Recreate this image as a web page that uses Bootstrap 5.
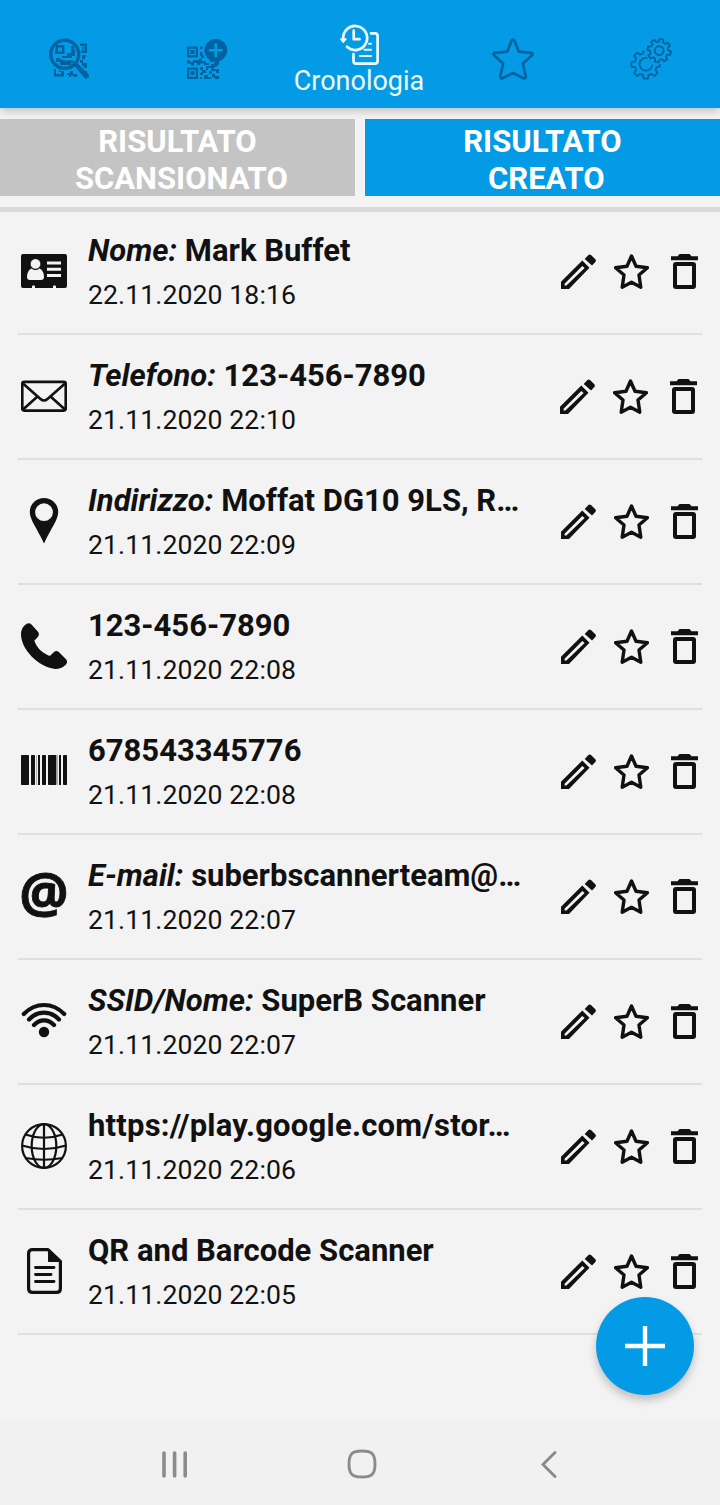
<!DOCTYPE html>
<html lang="it">
<head>
<meta charset="utf-8">
<meta name="viewport" content="width=device-width, initial-scale=1">
<title>Cronologia</title>
<link href="https://cdn.jsdelivr.net/npm/bootstrap@5.3.0/dist/css/bootstrap.min.css" rel="stylesheet">
<style>
  body { font-family: Roboto, "Liberation Sans", sans-serif; background: #f3f3f3; color: #111; width: 720px; height: 1505px; overflow: hidden; }
  svg { display: block; flex: none; }
  .topbar { height: 108px; background: #049be6; color: #00629f; box-shadow: 0 2px 9px rgba(0,0,0,.25); z-index: 2; }
  .topbar .tab-item { width: 138px; height: 118px; }
  .topbar .tab-active { width: 168px; height: 108px; color: #eefcff; padding: 23px 2px 0 0; }
  .tab-label { font-size: 27px; line-height: 30px; margin-top: 1px; }
  .switcher { margin-top: 11px; gap: 10px; }
  .switcher .btn { height: 77px; border-radius: 0; border: 0; padding: 4px 0 0; font-weight: 700; font-size: 31px; line-height: 37px; color: #fff; white-space: pre; background: #c4c4c4; }
  .switcher .btn.on { background: #049be6; }
  .rule { height: 5px; background: #d9d9d9; margin: 11px 0 -2px; flex: none; }
  .entry { height: 125px; border-bottom: 2px solid #dfdfdf; margin: 0 18px; padding: 0 4px 0 3px; }
  .entry .kind { margin-top: 38px; width: 46px; height: 46px; }
  .entry .info { margin-left: 21px; padding-top: 22px; width: 473px; white-space: nowrap; }
  .entry .title { font-weight: 700; font-size: 31px; line-height: 37px; }
  .entry .title.link { letter-spacing: .23px; }
  .entry .date { font-size: 26.6px; line-height: 34px; margin-top: 9px; letter-spacing: .1px; }
  .entry .tools { margin-top: 44px; gap: 18px; height: 35px; }
  .entry .tools svg:last-child { margin-left: 4px; }
  .entry.nudge .tools { margin-left: -1px; }
  .fab { width: 98px; height: 98px; left: 596px; top: 1297px; background: #049be6; box-shadow: 0 5px 8px rgba(0,0,0,.22); }
  .sysbar { height: 84px; background: #f1f1f1; padding: 2px 78px 0 81px; color: #8b8b8b; }
</style>
</head>
<body class="d-flex flex-column position-relative">

<svg class="d-none">
  <symbol id="pencil" viewBox="0 0 35 35"><path fill="currentColor" fill-rule="evenodd" d="M0 35V27.700L21.300 6.500l7.200 7.200L8 35ZM3.600 31.500H5.400L23.600 14 21.300 11.900 3.600 29.700Z"/><path fill="currentColor" d="M23.700 4.900 27.400 1Q28.500 0 30 .9L34.300 5.200Q35.500 6.500 34.300 7.900L31 11.500Z"/></symbol>
  <symbol id="star" viewBox="0 0 35 35"><path fill="none" stroke="currentColor" stroke-width="3.400" stroke-linejoin="round" d="M17.500 2 22 12.200 33.400 13.700 25 21 26.800 33.200 17.500 28.200 8.200 33.200 10 21 1.600 13.700 13 12.200Z"/></symbol>
  <symbol id="trash" viewBox="0 0 27 35"><path fill="currentColor" d="M0 2.300H6.500L8.500 0H18.500L20.500 2.300H27V6.200H0Z"/><rect x="4" y="10" width="19" height="23" rx="1" fill="none" stroke="currentColor" stroke-width="4"/></symbol>
</svg>

<nav class="topbar d-flex flex-shrink-0 position-relative">
  <div class="tab-item d-flex align-items-center justify-content-center">
    <svg width="42" height="42" viewBox="48 38 42 42" fill="currentColor">
      <circle cx="64.700" cy="54.300" r="14" fill="none" stroke="currentColor" stroke-width="3.400"/>
      <path d="M74 65.500 77 62.800 88.500 74Q90 76.500 87.500 78 86 79.300 84.300 77.800Z"/>
      <path fill-rule="evenodd" d="M56 45H64.500V54H55ZM58 47.500V51.500H62V47.500ZM80 43.500H87V53H81V50.500H84.500V46H80ZM82 47H83.500V49.500H82Z"/>
      <path d="M71 46H74V49H75V56H72V58H62V56H67V53H71ZM56 58H60V59.500H63V60.500H74V63H71V65H60V62H56ZM54 69H56V74H61V71H64V76.500H54ZM59 70H60.500V72H59ZM67 73H70V71H73V74H77V77H74V75.500H71V77H69V75H67ZM82 55H86V57H85V59H82ZM80 60H83V63H87V68H84V66H82V63H80ZM84 71H87V73H84Z"/>
    </svg>
  </div>
  <div class="tab-item d-flex align-items-center justify-content-center">
    <svg width="42" height="42" viewBox="186 38 42 42" fill="currentColor">
      <circle cx="215.800" cy="50.300" r="11.400"/>
      <path d="M215.800 43.300V57.300M208.800 50.300H222.800" stroke="#049be6" stroke-width="2.600"/>
      <path fill-rule="evenodd" d="M187 46.500H198V57.500H187ZM189.200 48.700V55.300H195.800V48.700ZM187 67.500H198V79H187ZM189.200 69.700V76.800H195.800V69.700Z"/>
      <path d="M190.500 50H194.500V54H190.500ZM190.500 71H194.500V75H190.500ZM200 46.500H202.500V49H200ZM200 52H202.500V55H204V58H201V56H200ZM187 60H190V62H193V60H199V58.500H202V61H206V63H209V65H204V63.500H200V65H197V63H194V65.500H191V63.500H187ZM200 67H203V70H206V73H203V75H200V72.500H202V70H200ZM206 66H211V64H214V62H217V60H219V65H217V67H214V69H219V73H216V71H212V74H209V71H211V68H208V70H206ZM200 77H202V79H200ZM204 75H208V77H211V79H204ZM212 74H215V76H219V79H215V77.500H212ZM210 60H213V62H210Z"/>
    </svg>
  </div>
  <div class="tab-item tab-active d-flex flex-column align-items-center">
    <svg width="42" height="42" viewBox="338 23 42 42" fill="none" stroke="currentColor" stroke-width="2.700" stroke-linecap="round" stroke-linejoin="round">
      <path d="M343.200 39A12 12 0 1 1 347 46.800"/>
      <path d="M340.800 39H346L343.200 42.200Z" fill="currentColor" stroke-width="1.500"/>
      <path d="M353.700 30.500V39.200H359.500"/>
      <path d="M371 33.300H375Q377.600 33.300 377.600 36V61Q377.600 63.600 375 63.600H356.200Q353.500 63.600 353.500 61V54"/>
      <path d="M369 43.800H371M364.500 49.800H371M360 56H371" stroke-width="2.100"/>
    </svg>
    <div class="tab-label">Cronologia</div>
  </div>
  <div class="tab-item d-flex align-items-center justify-content-center">
    <svg width="42" height="42" viewBox="0 0 42 42"><path fill="none" stroke="currentColor" stroke-width="2.700" stroke-linejoin="round" d="M19.600 2.500Q21 .5 22.400 2.500L26.700 13.600 39 14.800Q41.500 15.300 40 17.200L30.800 25.500 33.800 38.500Q33.800 41 31.500 40.200L21 35 10.500 40.200Q8.200 41 8.200 38.500L11.200 25.500 2 17.200Q.5 15.300 3 14.800L15.300 13.600Z"/></svg>
  </div>
  <div class="tab-item d-flex align-items-center justify-content-center">
    <svg width="44" height="44" viewBox="629 37 44 44" fill="none" stroke="currentColor" stroke-width="1.800" stroke-linejoin="round" stroke-linecap="round">
      <g transform="translate(645.800 64.300) scale(.97)">
        <path d="M14.500.5V2.300L11.200 2.800 9.900 5.900 12.100 8.800 8.800 12.100 5.900 9.900 2.800 11.200 2.300 14.800H-2.300L-2.800 11.200-5.900 9.900-8.800 12.100-12.100 8.800-9.900 5.900-11.200 2.800-14.800 2.300V-2.300L-11.200-2.800-9.900-5.900-12.100-8.800-8.800-12.100-5.900-9.900-2.800-11.200-2.300-13.500"/>
        <path d="M.8-6.600A6.600 6.600 0 1 0 6.600 1.200"/>
      </g>
      <g transform="translate(659.200 50.600) rotate(12) scale(.79)" stroke-width="2.300">
        <path d="M11.200-2.800 14.800-2.300V2.300L11.200 2.800 9.900 5.900 12.100 8.800 8.800 12.100 5.900 9.900 2.800 11.200 2.300 14.800H-2.300L-2.800 11.200-5.900 9.900-8.800 12.100-12.100 8.800-9.900 5.900-11.200 2.800-14.800 2.300V-2.300L-11.200-2.800-9.900-5.900-12.100-8.800-8.800-12.100-5.900-9.900-2.800-11.200-2.300-14.800H2.300L2.800-11.200 5.900-9.900 8.800-12.100 12.100-8.800 9.900-5.900Z"/>
        <circle r="5.600"/>
      </g>
    </svg>
  </div>
</nav>

<div class="switcher d-flex flex-shrink-0">
  <button class="btn flex-fill w-50">RISULTATO
 SCANSIONATO</button>
  <button class="btn on flex-fill w-50">RISULTATO
 CREATO</button>
</div>
<div class="rule"></div>

<main class="flex-grow-1">
  <div class="entry d-flex">
    <svg class="kind" viewBox="0 0 46 46"><path fill="#111" d="M2 6H44Q46 6 46 8V38Q46 40 44 40H35V38.200Q33.500 36.500 32 38.200V40H14V38.200Q12.500 36.500 11 38.200V40H2Q0 40 0 38V8Q0 6 2 6Z"/><g fill="#f3f3f3"><path d="M10.500 20.500Q14.500 23.500 18.500 20.500 23 22.500 23 29 23 32 20 32H9Q6 32 6 29 6 22.500 10.500 20.500Z"/><circle cx="14.500" cy="15.900" r="5.200" stroke="#111" stroke-width=".6"/><path d="M26 13.600H40V16.500H26ZM26 19.800H40V22.700H26ZM26 26H40V29H26Z"/></g></svg>
    <div class="info"><div class="title"><i>Nome:</i> Mark Buffet</div><div class="date">22.11.2020 18:16</div></div>
    <div class="tools d-flex"><svg width="35" height="35"><use href="#pencil"/></svg><svg width="35" height="35"><use href="#star"/></svg><svg width="27" height="35"><use href="#trash"/></svg></div>
  </div>
  <div class="entry nudge d-flex">
    <svg class="kind" viewBox="0 0 46 46" fill="none" stroke="#111" stroke-width="2.600"><rect x="1.300" y="8.900" width="43.400" height="28.700" rx="2"/><path d="M2 10.500 19.500 26Q23 29 26.500 26L44 10.500M2 36.500 16.500 23.500M44 36.500 29.500 23.500"/></svg>
    <div class="info"><div class="title"><i>Telefono:</i> 123-456-7890</div><div class="date">21.11.2020 22:10</div></div>
    <div class="tools d-flex"><svg width="35" height="35"><use href="#pencil"/></svg><svg width="35" height="35"><use href="#star"/></svg><svg width="27" height="35"><use href="#trash"/></svg></div>
  </div>
  <div class="entry d-flex">
    <svg class="kind" viewBox="0 0 46 46"><path fill="#111" fill-rule="evenodd" d="M23 0C31 0 37.200 6 37.200 14 37.200 22 30 30 23 45.500 16 30 8.800 22 8.800 14 8.800 6 15 0 23 0ZM23 5.300A8.900 8.900 0 1 0 23 23.100 8.900 8.900 0 1 0 23 5.300Z"/></svg>
    <div class="info"><div class="title"><i>Indirizzo:</i> Moffat DG10 9LS, R…</div><div class="date">21.11.2020 22:09</div></div>
    <div class="tools d-flex"><svg width="35" height="35"><use href="#pencil"/></svg><svg width="35" height="35"><use href="#star"/></svg><svg width="27" height="35"><use href="#trash"/></svg></div>
  </div>
  <div class="entry d-flex">
    <svg class="kind" viewBox="0 0 46 46"><path fill="#111" d="M3.500 2.500Q7.500-1.500 10.500 1.500L17 8.800Q19 11.500 16.800 14L13.300 17.800C16 25 21 30 28.800 33L33 29Q35.500 27 38 29.300L44.800 36Q47.500 39 44.500 42 40.500 46 34 46C17 43.500 0 26.500 0 11Q0 6 3.500 2.500Z"/></svg>
    <div class="info"><div class="title">123-456-7890</div><div class="date">21.11.2020 22:08</div></div>
    <div class="tools d-flex"><svg width="35" height="35"><use href="#pencil"/></svg><svg width="35" height="35"><use href="#star"/></svg><svg width="27" height="35"><use href="#trash"/></svg></div>
  </div>
  <div class="entry d-flex">
    <svg class="kind" viewBox="0 0 46 46" fill="#111"><rect y="7" width="8" height="30" rx=".7"/><rect x="10" y="7" width="4" height="30" rx=".7"/><rect x="15" y="7" width="1" height="30" opacity=".3"/><rect x="17" y="7" width="2" height="30"/><rect x="21" y="7" width="4" height="30" rx=".7"/><rect x="27" y="7" width="8.400" height="30" rx=".7"/><rect x="36" y="7" width="1" height="30" opacity=".3"/><rect x="38" y="7" width="2" height="30"/><rect x="42" y="7" width="4" height="30" rx=".7"/></svg>
    <div class="info"><div class="title">678543345776</div><div class="date">21.11.2020 22:08</div></div>
    <div class="tools d-flex"><svg width="35" height="35"><use href="#pencil"/></svg><svg width="35" height="35"><use href="#star"/></svg><svg width="27" height="35"><use href="#trash"/></svg></div>
  </div>
  <div class="entry d-flex">
    <svg class="kind overflow-visible" viewBox="0 0 46 46"><text x="23" y="39.500" text-anchor="middle" font-family="Open Sans" font-weight="700" font-size="55" fill="#111" stroke="#111" stroke-width=".9">@</text></svg>
    <div class="info"><div class="title"><i>E-mail:</i> suberbscannerteam@…</div><div class="date">21.11.2020 22:07</div></div>
    <div class="tools d-flex"><svg width="35" height="35"><use href="#pencil"/></svg><svg width="35" height="35"><use href="#star"/></svg><svg width="27" height="35"><use href="#trash"/></svg></div>
  </div>
  <div class="entry d-flex">
    <svg class="kind" viewBox="0 0 46 46" fill="none" stroke="#111" stroke-width="4.200" stroke-linecap="round"><path d="M2.800 16Q11.500 7 23 7T43.200 16M8 21.500Q14.500 14.700 23 14.700T38 21.500M13 27Q17.500 22.300 23 22.300T33 27"/><circle cx="23" cy="34" r="5.200" fill="#111" stroke="none"/></svg>
    <div class="info"><div class="title"><i>SSID/Nome:</i> SuperB Scanner</div><div class="date">21.11.2020 22:07</div></div>
    <div class="tools d-flex"><svg width="35" height="35"><use href="#pencil"/></svg><svg width="35" height="35"><use href="#star"/></svg><svg width="27" height="35"><use href="#trash"/></svg></div>
  </div>
  <div class="entry d-flex">
    <svg class="kind" viewBox="0 0 46 46" fill="none" stroke="#111" stroke-width="2.200"><circle cx="23" cy="23" r="21.900"/><ellipse cx="23" cy="23" rx="12.300" ry="21.900"/><path d="M23 1V45M4.500 11.500Q23 18 41.500 11.500M1 22.500Q23 29.500 45 22.500M4.500 35Q23 38.500 41.500 35"/></svg>
    <div class="info"><div class="title link">https://play.google.com/stor…</div><div class="date">21.11.2020 22:06</div></div>
    <div class="tools d-flex"><svg width="35" height="35"><use href="#pencil"/></svg><svg width="35" height="35"><use href="#star"/></svg><svg width="27" height="35"><use href="#trash"/></svg></div>
  </div>
  <div class="entry d-flex">
    <svg class="kind" viewBox="0 0 46 46" fill="none" stroke="#111" stroke-width="3.200" stroke-linecap="round" stroke-linejoin="round"><path d="M27 1.600H11.500Q7.600 1.600 7.600 5.500V40.500Q7.600 44.400 11.500 44.400H35.500Q39.400 44.400 39.400 40.500V13.500Z"/><path fill="#111" stroke-width="1" d="M27.500 1.500V13.500H39.500Z"/><path d="M14.500 19.500H33M14.500 26.500H30M14.500 33.500H33" stroke-width="2.900"/></svg>
    <div class="info"><div class="title">QR and Barcode Scanner</div><div class="date">21.11.2020 22:05</div></div>
    <div class="tools d-flex"><svg width="35" height="35"><use href="#pencil"/></svg><svg width="35" height="35"><use href="#star"/></svg><svg width="27" height="35"><use href="#trash"/></svg></div>
  </div>
</main>

<div class="fab position-absolute rounded-circle d-flex align-items-center justify-content-center">
  <svg width="40" height="40" viewBox="0 0 40 40"><path stroke="#fff" stroke-width="4.400" d="M20 0V40M0 20H40"/></svg>
</div>

<footer class="sysbar d-flex align-items-center flex-shrink-0">
  <div class="flex-fill d-flex justify-content-center w-100"><svg width="27" height="29" viewBox="0 0 27 29" stroke="currentColor" stroke-width="3.600" stroke-linecap="round"><path d="M3 3V26M13.600 3V26M24.200 3V26"/></svg></div>
  <div class="flex-fill d-flex justify-content-center w-100"><svg width="30" height="30" viewBox="0 0 30 30" fill="none" stroke="currentColor" stroke-width="2.900"><path d="M15 2C25 2 28 5 28 15S25 28 15 28 2 25 2 15 5 2 15 2Z"/></svg></div>
  <div class="flex-fill d-flex justify-content-center w-100"><svg width="17" height="29" viewBox="0 0 17 29" fill="none" stroke="currentColor" stroke-width="2.900" stroke-linecap="round"><path d="M15 2.500 3 14.500 15 26.500"/></svg></div>
</footer>

<script src="https://cdn.jsdelivr.net/npm/bootstrap@5.3.0/dist/js/bootstrap.bundle.min.js"></script>
</body>
</html>
